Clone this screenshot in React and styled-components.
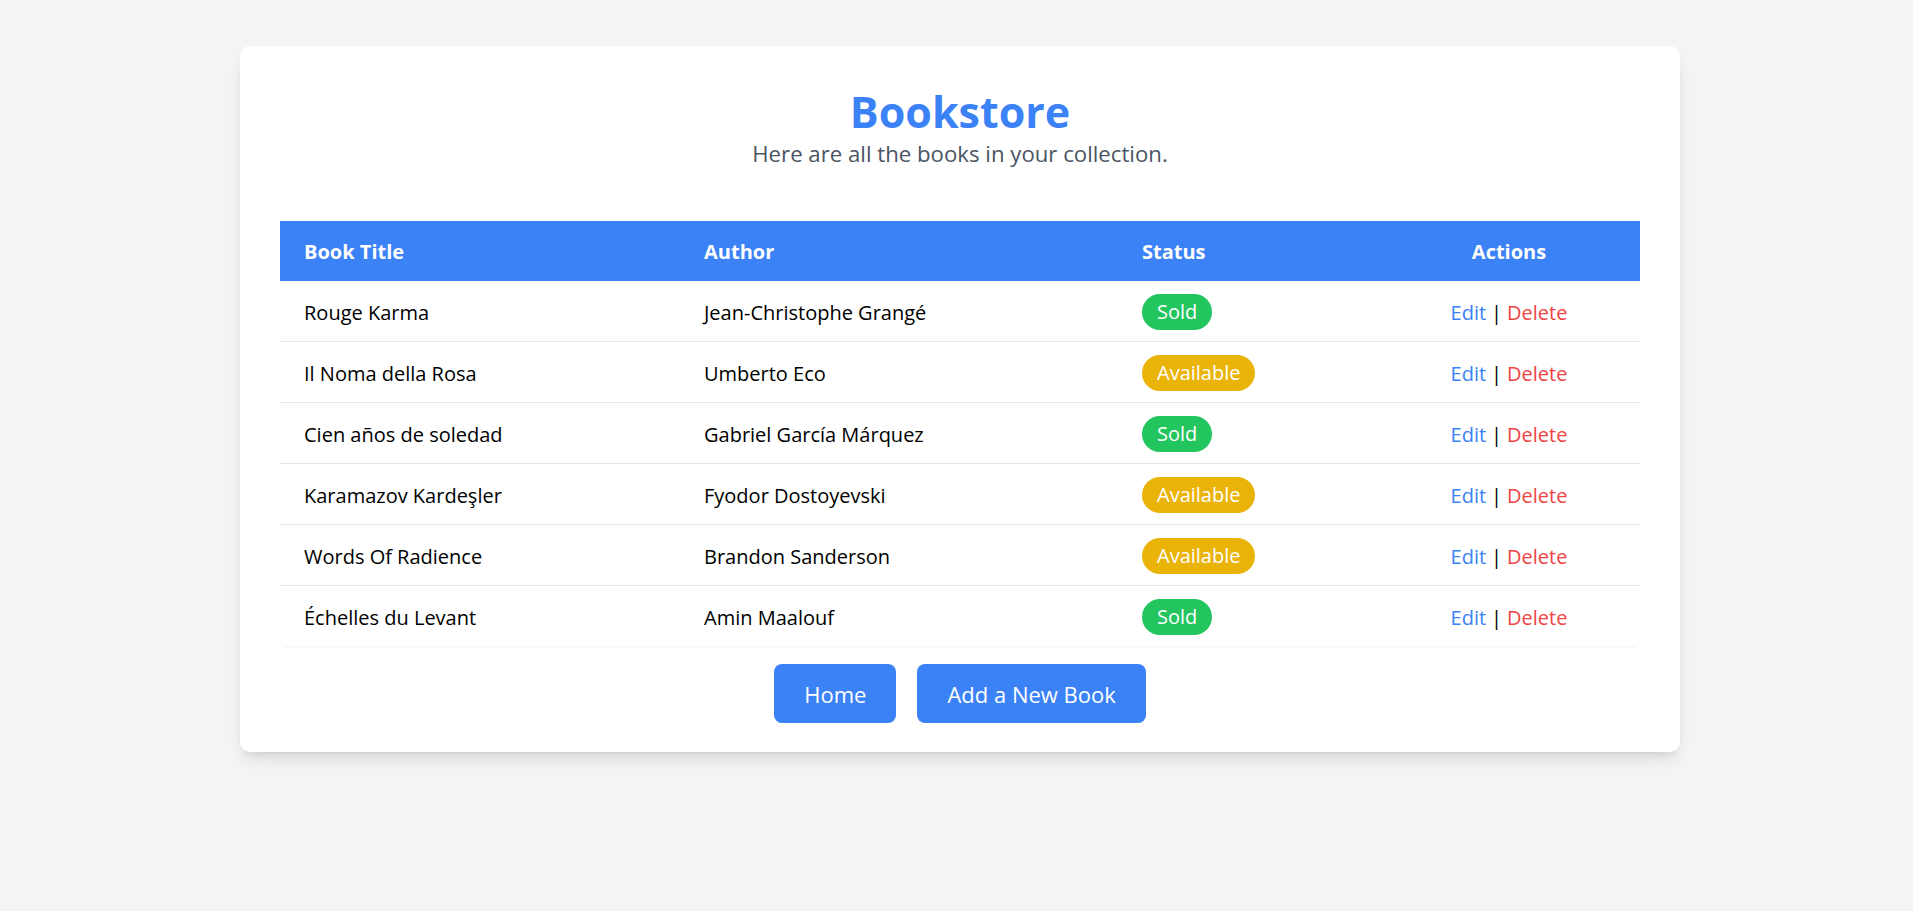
import React from "react";
import styled, { createGlobalStyle } from "styled-components";

const GlobalStyle = createGlobalStyle`
  body {
    margin: 0;
    background-color: #f3f4f6;
    font-family: "Open Sans", "Noto Sans", sans-serif;
    color: #111827;
  }
`;

const Page = styled.div`
  min-height: 911px;
  padding-top: 46px;
  box-sizing: border-box;
`;

const Card = styled.div`
  width: 1440px;
  margin-left: 240px;
  box-sizing: border-box;
  padding: 40px 40px 29px;
  background-color: #ffffff;
  border-radius: 10px;
  box-shadow: 0 10px 15px -3px rgba(0, 0, 0, 0.1),
    0 4px 6px -4px rgba(0, 0, 0, 0.1);
`;

const Header = styled.div`
  text-align: center;
  margin-bottom: 50px;
`;

const Title = styled.h1`
  margin: 0;
  font-size: 43px;
  line-height: 51px;
  font-weight: 700;
  color: #3b82f6;
`;

const Subtitle = styled.p`
  margin: 0;
  font-size: 22.2px;
  line-height: 34px;
  color: #4b5563;
`;

const TableWrap = styled.div`
  border-radius: 0 0 8px 8px;
  overflow: hidden;
  box-shadow: 0 1px 2px 0 rgba(0, 0, 0, 0.06);
  margin-bottom: 18px;
`;

const Table = styled.table`
  width: 100%;
  border-collapse: collapse;
  table-layout: fixed;
`;

const HeadRow = styled.tr`
  background-color: #3b82f6;
`;

const Th = styled.th`
  height: 59px;
  padding: 1px 24px 0;
  text-align: ${(p) => p.$align || "left"};
  font-size: 20px;
  font-weight: 700;
  color: #ffffff;
`;

const Row = styled.tr`
  & + & {
    border-top: 1px solid #e5e7eb;
  }
`;

const Td = styled.td`
  height: 58px;
  padding: 2px 24px 0;
  font-size: 20px;
  color: #000000;
  text-align: ${(p) => p.$align || "left"};
`;

const Badge = styled.span`
  display: inline-block;
  padding: 0 15px;
  height: 36px;
  line-height: 36px;
  border-radius: 999px;
  color: #ffffff;
  font-size: 20px;
  background-color: ${(p) => (p.$sold ? "#22c55e" : "#eab308")};
`;

const ActionLink = styled.a`
  color: ${(p) => (p.$danger ? "#ef4444" : "#3b82f6")};
  text-decoration: none;
  cursor: pointer;
`;

const Sep = styled.span`
  margin: 0 5px;
  color: #000000;
`;

const Buttons = styled.div`
  display: flex;
  justify-content: center;
  gap: 21px;
`;

const Button = styled.button`
  height: 59px;
  padding: 0 30px;
  border: none;
  border-radius: 8px;
  background-color: #3b82f6;
  color: #ffffff;
  font-family: inherit;
  font-size: 22px;
  cursor: pointer;
`;

const books = [
  { title: "Rouge Karma", author: "Jean-Christophe Grangé", sold: true },
  { title: "Il Noma della Rosa", author: "Umberto Eco", sold: false },
  { title: "Cien años de soledad", author: "Gabriel García Márquez", sold: true },
  { title: "Karamazov Kardeşler", author: "Fyodor Dostoyevski", sold: false },
  { title: "Words Of Radience", author: "Brandon Sanderson", sold: false },
  { title: "Échelles du Levant", author: "Amin Maalouf", sold: true },
];

export default function App() {
  return (
    <Page>
      <GlobalStyle />
      <Card>
        <Header>
          <Title>Bookstore</Title>
          <Subtitle>Here are all the books in your collection.</Subtitle>
        </Header>
        <TableWrap>
          <Table>
            <colgroup>
              <col style={{ width: "400px" }} />
              <col style={{ width: "438px" }} />
              <col style={{ width: "260px" }} />
              <col style={{ width: "262px" }} />
            </colgroup>
            <thead>
              <HeadRow>
                <Th>Book Title</Th>
                <Th>Author</Th>
                <Th>Status</Th>
                <Th $align="center">Actions</Th>
              </HeadRow>
            </thead>
            <tbody>
              {books.map((b) => (
                <Row key={b.title}>
                  <Td>{b.title}</Td>
                  <Td>{b.author}</Td>
                  <Td>
                    <Badge $sold={b.sold}>{b.sold ? "Sold" : "Available"}</Badge>
                  </Td>
                  <Td $align="center">
                    <ActionLink>Edit</ActionLink>
                    <Sep>|</Sep>
                    <ActionLink $danger>Delete</ActionLink>
                  </Td>
                </Row>
              ))}
            </tbody>
          </Table>
        </TableWrap>
        <Buttons>
          <Button>Home</Button>
          <Button>Add a New Book</Button>
        </Buttons>
      </Card>
    </Page>
  );
}
